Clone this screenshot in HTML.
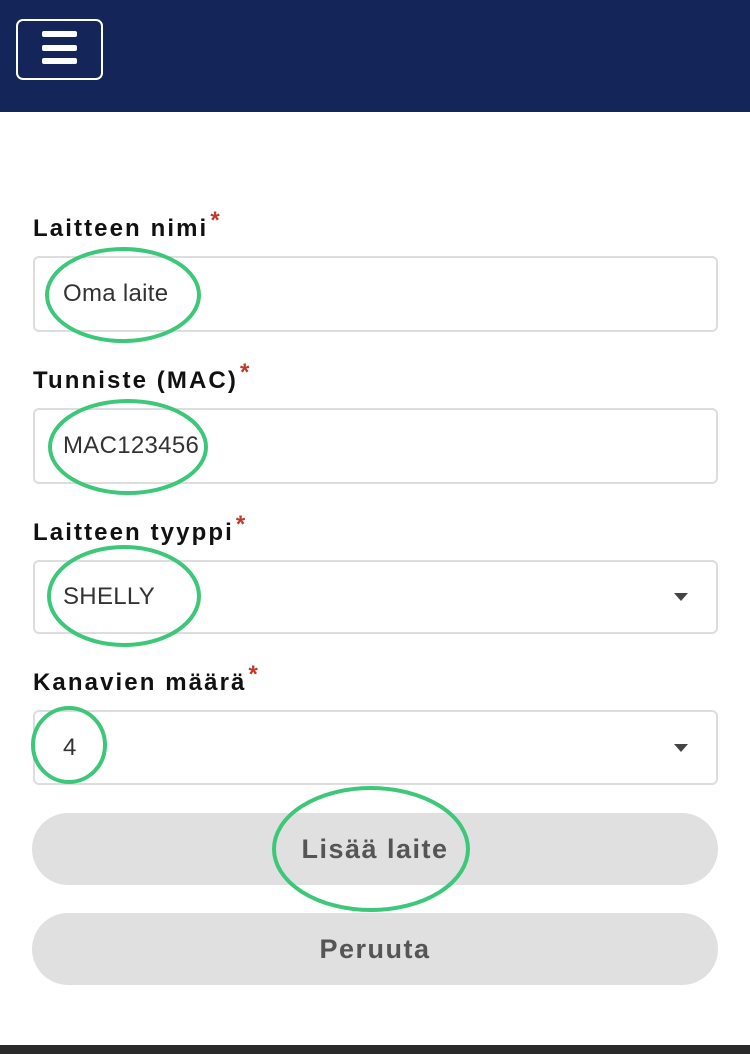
<!DOCTYPE html>
<html><head><meta charset="utf-8"><style>
*{box-sizing:border-box;margin:0;padding:0}
body{width:750px;height:1054px;position:relative;background:#fff;font-family:"Liberation Sans",sans-serif;overflow:hidden}
.hdr{position:absolute;left:0;top:0;width:750px;height:112px;background:#14255a}
.burger{position:absolute;left:16px;top:19px;width:87px;height:61px;border:2px solid #fff;border-radius:7px}
.burger i{position:absolute;left:24px;width:35px;height:6px;background:#fff;border-radius:2px}
.lbl{position:absolute;left:33px;font-size:24px;font-weight:bold;letter-spacing:2.1px;color:#111}
.lbl b{color:#c0392b;font-size:24px;position:relative;top:-8px;margin-left:2px}
.f{position:absolute;left:33px;width:685px;border:2px solid #ddd;border-radius:6px;font-size:24px;color:#333;padding-left:28px;display:flex;align-items:center;letter-spacing:0.3px}
.arr{position:absolute;right:28px;top:50%;margin-top:-4px;border-left:7px solid transparent;border-right:7px solid transparent;border-top:8px solid #444}
.btn{position:absolute;left:32px;width:686px;height:72px;border-radius:36px;background:#e0e0e0;color:#555;font-size:27px;font-weight:bold;letter-spacing:1.5px;display:flex;align-items:center;justify-content:center}
.foot{position:absolute;left:0;top:1045px;width:750px;height:9px;background:#2a2a2a}
svg{position:absolute;left:0;top:0}
</style></head><body>
<div class="hdr"><div class="burger"><i style="top:10px"></i><i style="top:24px"></i><i style="top:37px"></i></div></div>
<div class="lbl" style="top:215px">Laitteen nimi<b>*</b></div>
<div class="f" style="top:256px;height:76px">Oma laite</div>
<div class="lbl" style="top:367px">Tunniste (MAC)<b>*</b></div>
<div class="f" style="top:408px;height:76px">MAC123456</div>
<div class="lbl" style="top:519px">Laitteen tyyppi<b>*</b></div>
<div class="f" style="top:560px;height:74px">SHELLY<span class="arr"></span></div>
<div class="lbl" style="top:669px">Kanavien määrä<b>*</b></div>
<div class="f" style="top:710px;height:75px">4<span class="arr"></span></div>
<div class="btn" style="top:813px">Lisää laite</div>
<div class="btn" style="top:913px">Peruuta</div>
<div class="foot"></div>
<svg width="750" height="1054" fill="none" stroke="#3cc878" stroke-width="4">
<ellipse cx="123" cy="295" rx="76" ry="46"/>
<ellipse cx="128" cy="447" rx="78" ry="46"/>
<ellipse cx="124" cy="596" rx="75" ry="49"/>
<ellipse cx="69" cy="745" rx="36" ry="37"/>
<ellipse cx="371" cy="849" rx="97" ry="61"/>
</svg>
</body></html>
